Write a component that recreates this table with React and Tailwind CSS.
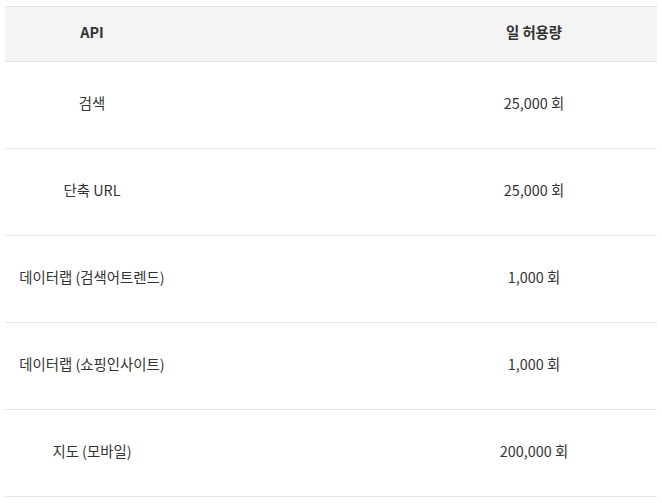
import React from 'react';

const rows = [
  { name: '검색', limit: '25,000 회' },
  { name: '단축 URL', limit: '25,000 회' },
  { name: '데이터랩 (검색어트렌드)', limit: '1,000 회' },
  { name: '데이터랩 (쇼핑인사이트)', limit: '1,000 회' },
  { name: '지도 (모바일)', limit: '200,000 회' },
];

export default function App() {
  return (
    <div
      className="bg-white w-[662px] h-[503px] pt-[6px] px-[5px] text-[14.4px] text-[#333]"
      style={{ fontFamily: '"Noto Sans CJK KR", "Noto Sans", sans-serif' }}
    >
      <div className="border-t border-[#e5e5e5]">
        <div className="grid grid-cols-[174px_1fr_246px] h-[55px] pb-[4px] items-center bg-[#f4f4f4] border-b border-[#e5e5e5] font-semibold">
          <div className="text-center">API</div>
          <div />
          <div className="text-center">일 허용량</div>
        </div>
        {rows.map((row) => (
          <div
            key={row.name}
            className="grid grid-cols-[174px_1fr_246px] h-[87px] pb-[4px] items-center border-b border-[#e5e5e5]"
          >
            <div className="text-center">{row.name}</div>
            <div />
            <div className="text-center">{row.limit}</div>
          </div>
        ))}
      </div>
    </div>
  );
}
